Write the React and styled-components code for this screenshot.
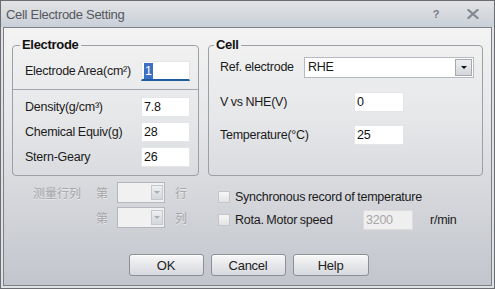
import React from 'react';
import styled, { createGlobalStyle } from 'styled-components';

const FONT = `"Liberation Sans", Arial, sans-serif`;
const CJK = `"Noto Sans CJK SC", "Liberation Sans", sans-serif`;

const Global = createGlobalStyle`
  html, body { margin: 0; padding: 0; background: #ffffff; }
  * { box-sizing: border-box; }
`;

const Window = styled.div`
  width: 495px;
  height: 289px;
  display: flex;
  flex-direction: column;
  border: 1px solid #6c6d72;
  background: #dfe1e5;
  font-family: ${FONT};
  font-size: 12.5px;
  letter-spacing: -0.25px;
  word-spacing: -0.5px;
  color: #1b1b1b;
`;

const TitleBar = styled.div`
  height: 26px;
  flex: 0 0 26px;
  display: flex;
  align-items: center;
  padding: 0 13px 0 5px;
  background: linear-gradient(180deg, #e2e3e5 0%, #d6d9de 50%, #c9d0da 100%);
`;

const Title = styled.span`
  flex: 1;
  color: #55585d;
  font-size: 13px;
  letter-spacing: -0.3px;
  word-spacing: 0;
`;

const TitleBtn = styled.span`
  width: ${p => p.$w}px;
  margin-right: ${p => p.$mr || 0}px;
  display: flex;
  justify-content: center;
  color: #767c87;
  font-weight: bold;
  font-size: 11px;
`;

const Frame = styled.div`
  flex: 1;
  display: flex;
  padding: 0 2px 2px 2px;
`;

const Content = styled.div`
  flex: 1;
  display: flex;
  flex-direction: column;
  border: 1px solid #7d8087;
  background: linear-gradient(180deg, #f3f3f3 0%, #e6e7e9 35%, #c2c5cc 100%);
`;

const TopRow = styled.div`
  display: flex;
  gap: 9px;
  padding: 9px 0 0 8px;
`;

const Group = styled.fieldset`
  margin: 0;
  width: ${p => p.$w}px;
  height: 139px;
  border: 1px solid #9c9fa6;
  border-radius: 4px;
  padding: ${p => p.$pad};
  display: flex;
  flex-direction: column;
  min-width: 0;
`;

const Legend = styled.legend`
  padding: 0 2px;
  margin-left: ${p => p.$ml}px;
  font-weight: bold;
  font-size: 13px;
  line-height: 16px;
  letter-spacing: -0.3px;
  color: #111;
`;

const FieldRow = styled.div`
  display: flex;
  align-items: center;
  height: 20px;
  flex: 0 0 20px;
  margin-top: ${p => p.$mt || 0}px;
`;

const Label = styled.span`
  ${p => (p.$w ? `flex: 0 0 ${p.$w}px;` : 'flex: 1;')}
  white-space: nowrap;
`;

const TextBox = styled.div`
  width: ${p => p.$w || 49}px;
  height: 20px;
  display: flex;
  align-items: center;
  padding-left: 2px;
  background: ${p => (p.$disabled ? '#efefef' : '#ffffff')};
  color: ${p => (p.$disabled ? '#a6a6a6' : '#111')};
  border: 1px solid ${p => (p.$disabled ? '#dcdcdc' : '#e4e5e8')};
  border-bottom: ${p => (p.$focused ? '2px solid #1f5b9f' : undefined)};
`;

const Selected = styled.span`
  background: #3b70c2;
  color: #ffffff;
  padding: 0 1px;
  line-height: 16px;
`;

const Separator = styled.div`
  height: 1px;
  background: #a3a6ac;
  margin: 8px -8px 7px -12px;
`;

const Stack = styled.div`
  display: flex;
  flex-direction: column;
  gap: 5px;
`;

const Select = styled.div`
  flex: 1;
  height: 21px;
  display: flex;
  align-items: center;
  border: 1px solid #b6b9bf;
  background: #ffffff;
  padding: 1px 1px 1px 3px;
`;

const SelectValue = styled.span`
  flex: 1;
`;

const DropBtn = styled.div`
  width: ${p => p.$w}px;
  height: 100%;
  display: flex;
  align-items: center;
  justify-content: center;
  border: 1px solid ${p => (p.$disabled ? '#c4c7cc' : '#a6a9ae')};
  background: linear-gradient(180deg, #eeeff1 0%, #d3d6db 100%);
`;

const Arrow = styled.span`
  width: 0;
  height: 0;
  border-left: 3px solid transparent;
  border-right: 3px solid transparent;
  border-top: 3px solid ${p => (p.$disabled ? '#a9acb1' : '#111')};
`;

const Options = styled.div`
  display: flex;
  align-items: flex-start;
  margin-top: 6px;
  padding-left: 29px;
`;

const Measure = styled.div`
  display: grid;
  grid-template-columns: 63px 21px 48px 24px;
  grid-auto-rows: 21px;
  row-gap: 4px;
  align-items: center;
  color: #a4a5a8;
  font-family: ${CJK};
  font-size: 12px;
  letter-spacing: 0;
`;

const GridCell = styled.span`
  grid-column: ${p => p.$col};
  padding-left: ${p => p.$pl || 0}px;
  text-shadow: 0 1px 0 rgba(255, 255, 255, 0.5);
`;

const Combo = styled.div`
  grid-column: 3;
  height: 21px;
  display: flex;
  justify-content: flex-end;
  border: 1px solid #b3b6bc;
  background: #f1f1f1;
  padding: 2px 1px 2px 0;
`;

const Checks = styled.div`
  display: flex;
  flex-direction: column;
  gap: 3px;
  margin: 5px 0 0 29px;
`;

const CheckRow = styled.div`
  display: flex;
  align-items: center;
  height: 20px;
`;

const CheckBox = styled.span`
  width: 12px;
  height: 12px;
  margin-right: 5px;
  border: 1px solid #c4c6ca;
  background: linear-gradient(180deg, #f6f6f6 0%, #e3e3e5 100%);
`;

const Unit = styled.span`
  margin-left: 17px;
`;

const ButtonRow = styled.div`
  display: flex;
  justify-content: center;
  gap: 7px;
  margin-top: 24px;
  padding-left: 2px;
`;

const Button = styled.div`
  width: ${p => p.$w || 75}px;
  height: 22px;
  display: flex;
  align-items: center;
  justify-content: center;
  border: 1px solid #8c8f96;
  border-radius: 3px;
  background: linear-gradient(180deg, #f8f8f9 0%, #e6e7ea 50%, #d6d9de 100%);
  box-shadow: inset 0 1px 0 #ffffff;
  color: #222;
  font-size: 13px;
`;

const CloseIcon = () => (
  <svg width="12" height="10" viewBox="0 0 12 10">
    <path d="M1.5 1 L10.5 9 M10.5 1 L1.5 9" stroke="#848a94" strokeWidth="2.2" strokeLinecap="square" />
  </svg>
);

export default function App() {
  return (
    <>
      <Global />
      <Window>
        <TitleBar>
          <Title>Cell Electrode Setting</Title>
          <TitleBtn $w={12} $mr={23}>?</TitleBtn>
          <TitleBtn $w={16}><CloseIcon /></TitleBtn>
        </TitleBar>
        <Frame>
          <Content>
            <TopRow>
              <Group $w={187} $pad="8px 8px 0 12px">
                <Legend $ml={-5}>Electrode</Legend>
                <FieldRow>
                  <Label>Electrode Area(cm²)</Label>
                  <TextBox $focused><Selected>1</Selected></TextBox>
                </FieldRow>
                <Separator />
                <Stack>
                  <FieldRow>
                    <Label>Density(g/cm³)</Label>
                    <TextBox>7.8</TextBox>
                  </FieldRow>
                  <FieldRow>
                    <Label>Chemical Equiv(g)</Label>
                    <TextBox>28</TextBox>
                  </FieldRow>
                  <FieldRow>
                    <Label>Stern-Geary</Label>
                    <TextBox>26</TextBox>
                  </FieldRow>
                </Stack>
              </Group>
              <Group $w={275} $pad="4px 8px 0 11px">
                <Legend $ml={-6}>Cell</Legend>
                <FieldRow>
                  <Label $w={84}>Ref. electrode</Label>
                  <Select>
                    <SelectValue>RHE</SelectValue>
                    <DropBtn $w={17}><Arrow /></DropBtn>
                  </Select>
                </FieldRow>
                <FieldRow $mt={15}>
                  <Label $w={134}>V vs NHE(V)</Label>
                  <TextBox $w={50}>0</TextBox>
                </FieldRow>
                <FieldRow $mt={13}>
                  <Label $w={134}>Temperature(°C)</Label>
                  <TextBox $w={50}>25</TextBox>
                </FieldRow>
              </Group>
            </TopRow>
            <Options>
              <Measure>
                <GridCell $col={1}>测量行列</GridCell>
                <GridCell $col={2}>第</GridCell>
                <Combo><DropBtn $w={12} $disabled><Arrow $disabled /></DropBtn></Combo>
                <GridCell $col={4} $pl={10}>行</GridCell>
                <GridCell $col={2}>第</GridCell>
                <Combo><DropBtn $w={12} $disabled><Arrow $disabled /></DropBtn></Combo>
                <GridCell $col={4} $pl={10}>列</GridCell>
              </Measure>
              <Checks>
                <CheckRow>
                  <CheckBox />
                  <span>Synchronous record of temperature</span>
                </CheckRow>
                <CheckRow>
                  <CheckBox />
                  <Label $w={128}>Rota. Motor speed</Label>
                  <TextBox $w={50} $disabled>3200</TextBox>
                  <Unit>r/min</Unit>
                </CheckRow>
              </Checks>
            </Options>
            <ButtonRow>
              <Button>OK</Button>
              <Button>Cancel</Button>
              <Button $w={76}>Help</Button>
            </ButtonRow>
          </Content>
        </Frame>
      </Window>
    </>
  );
}
